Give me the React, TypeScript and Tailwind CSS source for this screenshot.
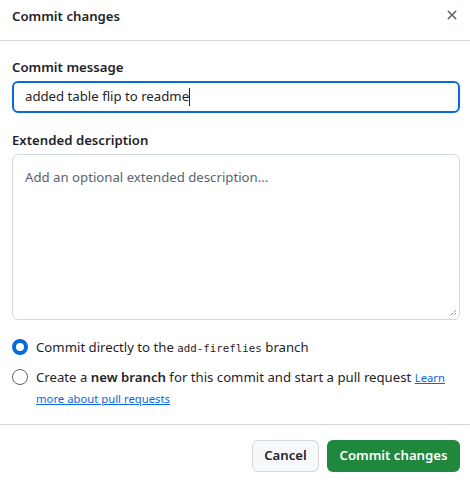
import React from "react";

export default function App() {
  const font = { fontFamily: '"Noto Sans", "Open Sans", sans-serif' };
  return (
    <div className="w-[470px] h-[482px] bg-white text-[#1f2328] flex flex-col" style={font}>
      <div className="h-[41px] flex items-start justify-between pl-3 pr-[10px] pt-[6px] border-b border-[#d1d9e0]">
        <div className="text-[13.2px] font-semibold leading-5">Commit changes</div>
        <svg width="16" height="16" viewBox="0 0 16 16" className="text-[#59636e] mt-[1px]" fill="currentColor">
          <path d="M3.72 3.72a.75.75 0 0 1 1.06 0L8 6.94l3.22-3.22a.749.749 0 0 1 1.275.326.749.749 0 0 1-.215.734L9.06 8l3.22 3.22a.749.749 0 0 1-.326 1.275.749.749 0 0 1-.734-.215L8 9.06l-3.22 3.22a.751.751 0 0 1-1.042-.018.751.751 0 0 1-.018-1.042L6.94 8 3.72 4.78a.75.75 0 0 1 0-1.06Z" />
        </svg>
      </div>
      <div className="pl-3 pr-[10px] pt-4 pb-[15px] flex flex-col border-b border-[#d1d9e0]">
        <div className="text-[13.2px] font-semibold leading-5 mb-1">Commit message</div>
        <div className="h-8 rounded-md border-2 border-[#0969da] flex items-center pl-[11px] text-[13.2px]">
          <span>added table flip to readme</span>
          <span className="w-px h-[18px] bg-[#1f2328]" />
        </div>
        <div className="text-[13.2px] font-semibold leading-5 mt-[17px] mb-1">Extended description</div>
        <div className="relative h-[166px] rounded-md border border-[#d1d9e0] px-3 pt-[12px] text-[13.2px] leading-5 text-[#59636e]">
          Add an optional extended description...
          <svg className="absolute right-[2px] bottom-[2px]" width="8" height="8" viewBox="0 0 8 8">
            <path d="M7 1 L1 7 M7 4 L4 7" stroke="#59636e" strokeWidth="1" strokeDasharray="1 1" />
          </svg>
        </div>
        <div className="flex items-start gap-2 mt-[17px] text-[13.2px] leading-5">
          <div className="w-4 h-4 mt-[2px] rounded-full border-[4px] border-[#0969da] bg-white shrink-0" />
          <div>
            Commit directly to the{" "}
            <span className="text-[10.8px]" style={{ fontFamily: '"DejaVu Sans Mono", monospace' }}>add-fireflies</span>{" "}
            branch
          </div>
        </div>
        <div className="flex items-start gap-2 mt-[8px] text-[13.2px] leading-[21px]">
          <div className="w-4 h-4 mt-[2px] rounded-full border border-[#59636e] bg-white shrink-0" />
          <div>
            Create a <span className="font-semibold">new branch</span> for this commit and start a pull request{" "}
            <a className="text-[#0969da] underline text-[11.3px]">Learn more about pull requests</a>
          </div>
        </div>
      </div>
      <div className="flex justify-end gap-2 pl-3 pr-[10px] pt-[15px]">
        <button className="h-8 w-[67px] rounded-md border border-[#d1d9e0] bg-[#f6f8fa] text-[13.2px] font-semibold text-[#1f2328]">Cancel</button>
        <button className="h-8 w-[133px] rounded-md bg-[#1f883d] text-white text-[13.2px] font-semibold">Commit changes</button>
      </div>
    </div>
  );
}
